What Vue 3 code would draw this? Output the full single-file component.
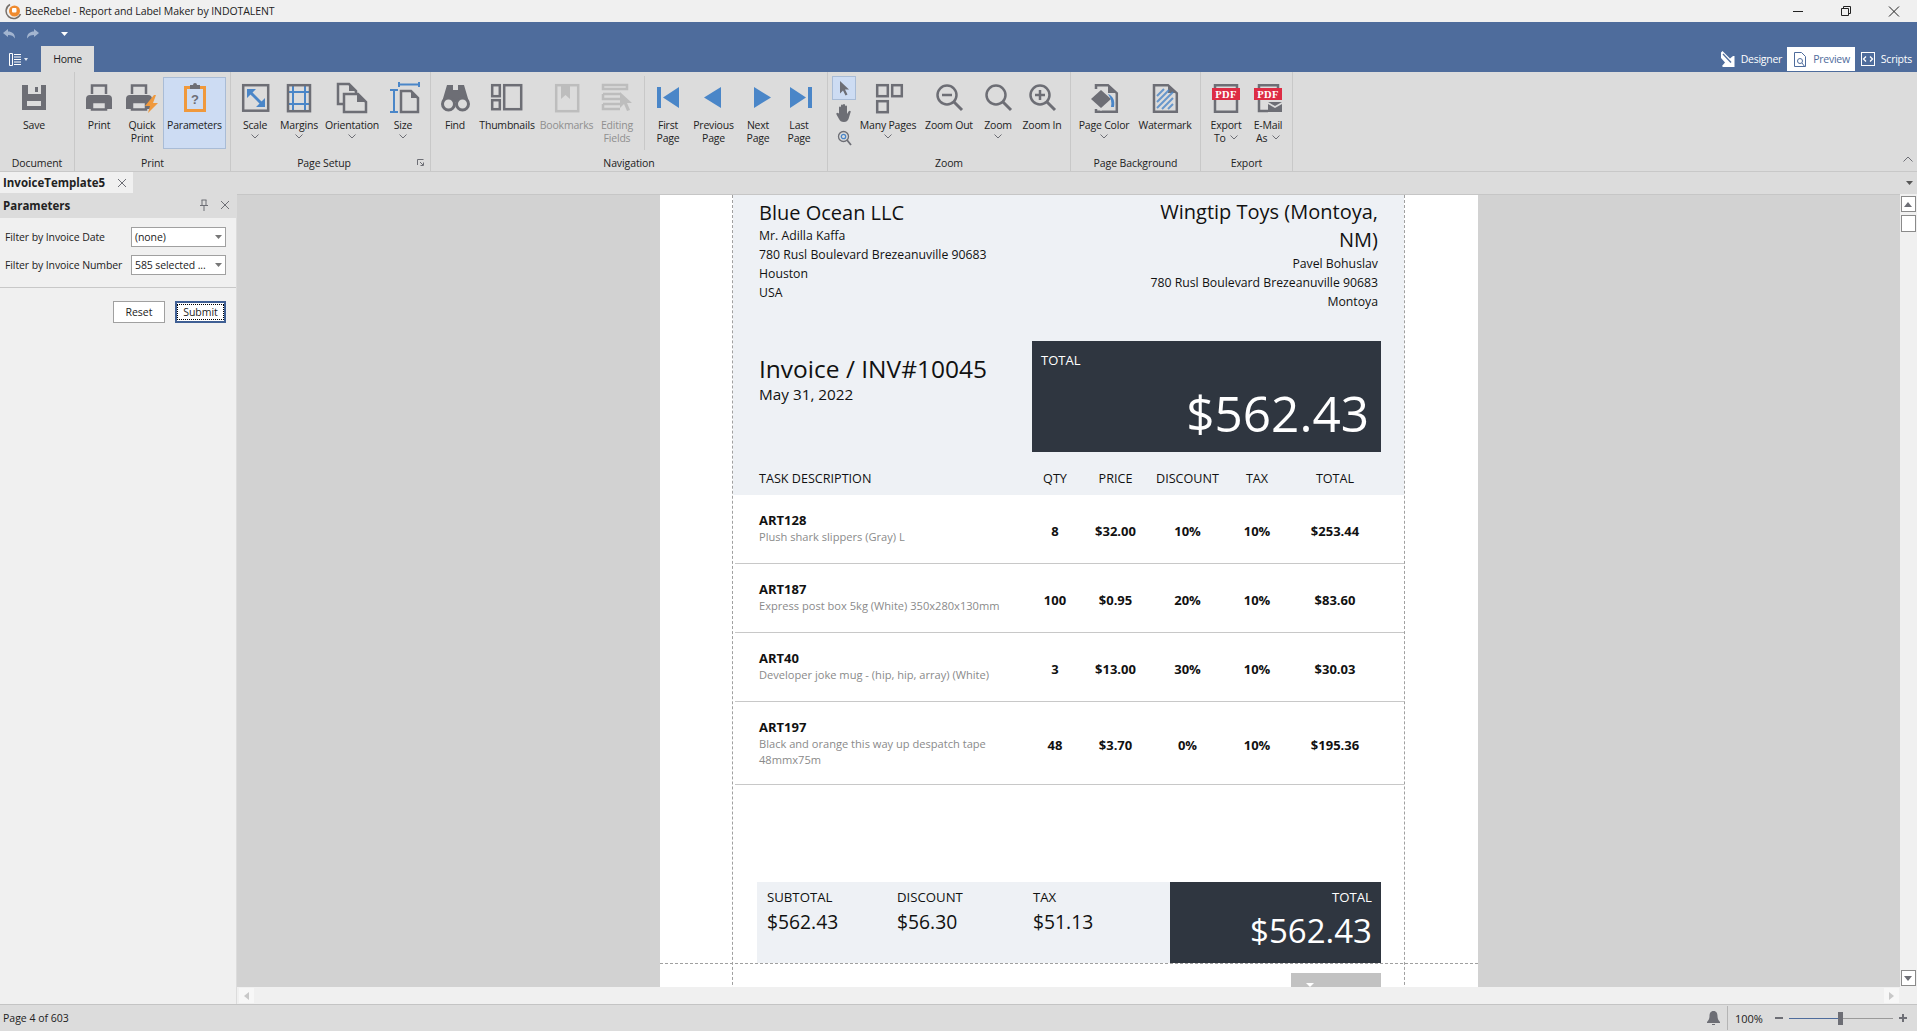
<script setup>
const G = '#6d6e75'
const B = '#4a86c8'
const O = '#f0993c'
const R = '#dd2c44'
const L = '#bdbdbd'
const paper = (s) => `fill="none" stroke="${s}" stroke-width="2.5"`

const printer = (x) => `<path ${paper(G)} d="M${x + 6} 13V4.5h14V13"/><path fill="${G}" d="M${x} 18a4 4 0 0 1 4-4h18a4 4 0 0 1 4 4v10h-5v-7H${x + 5}v7H${x}z"/><rect ${paper(G)} x="${x + 6}" y="21" width="14" height="7.5"/>`
const pdf = `<rect x="2" y="7" width="28" height="12" fill="${R}"/><text x="16" y="17" text-anchor="middle" font-family="Liberation Serif" font-weight="700" font-size="10.5" letter-spacing=".4" fill="#fff">PDF</text>`
const lens = (extra) => `<circle cx="14" cy="14" r="9.5" ${paper(G)}/><path stroke="${G}" stroke-width="3" d="M21 21l8 8"/>${extra}`

const icons = {
  save: `<path fill="${G}" fill-rule="evenodd" d="M4 4h24v25H4zM10 4v9h13V4zM9 20h14v5H9z"/><path fill="${G}" d="M17 6h3v5h-3z"/>`,
  print: printer(3),
  quick: printer(0) + `<path fill="${O}" d="M28 14l-9 11h5l-2 7 10-10h-5l3-8z"/>`,
  params: `<path fill="${O}" d="M5 5h6v3H8v20h16V8h-3V5h6v26H5z"/><path fill="${G}" d="M11 4h3a2 2 0 0 1 4 0h3v4H11z"/><text x="16" y="23" text-anchor="middle" font-family="Liberation Sans" font-weight="700" font-size="13" fill="${G}">?</text>`,
  scale: `<rect x="4.2" y="4.2" width="25" height="25.500" ${paper(G)}/><path stroke="${B}" stroke-width="3" d="M11 11l12 12"/><path fill="${B}" d="M8 8h9l-9 9zM26 26h-9l9-9z"/>`,
  margins: `<path stroke="${B}" stroke-width="2" fill="none" d="M10 4v26M22 4v26M4 11h24M4 23h24"/><rect x="5" y="4.200" width="22" height="26" ${paper(G)}/>`,
  orient: `<path ${paper(G)} d="M7 23H2V3h11l7 7v3"/><path fill="${G}" d="M13 3l7 7h-7z"/><path ${paper(G)} d="M8 13h14l8 8v10H8z"/><path fill="${G}" d="M21 13l9 8h-9z"/>`,
  size: `<path stroke="${B}" stroke-width="2" fill="none" d="M12 1v5M32 1v5M12 3.500h20M3 9h8M3 31h8M7 9v22"/><path ${paper(G)} d="M14 10h10l7 7v14H14z"/><path fill="${G}" d="M24 10l7 7h-7z"/>`,
  find: `<path fill="${G}" d="M8 4h6v5h5V4h6l5 17H3z"/><circle cx="9.500" cy="23" r="6" fill="#dcdcdc" stroke="${G}" stroke-width="3"/><circle cx="23.500" cy="23" r="6" fill="#dcdcdc" stroke="${G}" stroke-width="3"/>`,
  thumbs: `<g ${paper(G)}><rect x="1.200" y="4.200" width="7.600" height="11"/><rect x="1.200" y="19.200" width="7.600" height="9"/><rect x="13.200" y="4.200" width="17" height="24"/></g>`,
  bookmarks: `<rect x="5.200" y="4.200" width="22" height="26" ${paper(L)}/><path fill="${L}" d="M10 3h9v15l-4.500-4-4.500 4z"/>`,
  editing: `<g ${paper(L)}><path d="M2 4h24v4H2zM2 13h17M2 13v5h17M2 23h17M2 23v5h17"/></g><path fill="${L}" d="M19 11l12 11h-5l3 7-3 1-3-7-4 4z"/>`,
  first: `<path fill="${B}" d="M5 6h4v21H5zM27 6v21L11 16.500z"/>`,
  prev: `<path fill="${B}" d="M23 6v21L6 16.500z"/>`,
  next: `<path fill="${B}" d="M12 6v21l17-10.500z"/>`,
  last: `<path fill="${B}" d="M7 6v21l16-10.500zM25 6h4v21h-4z"/>`,
  many: `<g ${paper(G)}><rect x="5.200" y="4.200" width="10.600" height="11"/><rect x="20.200" y="4.200" width="9.600" height="11"/><rect x="5.200" y="20.200" width="10.600" height="11"/></g>`,
  zoomOut: lens(`<path stroke="${G}" stroke-width="2.500" d="M9 14h10"/>`),
  zoom: lens(''),
  zoomIn: lens(`<path stroke="${G}" stroke-width="2.500" d="M9 14h10M14 9v10"/>`),
  pageColor: `<path ${paper(G)} d="M8 8V4.200h12l8.800 8V30.800H8V28"/><path fill="${G}" d="M20 4l9 8h-9z"/><path fill="#dcdcdc" d="M1 18l12-12 12 12-12 12z"/><path fill="${G}" d="M3 18l10-9 10 9-10 9z"/><path fill="${B}" d="M20 13c5 2 7 6 6 13h-3c1-5 0-9-3-13z"/>`,
  watermark: `<path ${paper(G)} d="M5 4.200h14l8.800 8V30.800H5z"/><path fill="${G}" d="M19 4l9 8h-9z"/><path stroke="${B}" stroke-width="2" opacity=".8" d="M8 15l7-7M8 21l12-12M8 27l16-16M13 28l11-11M19 28l5-5"/>`,
  exportTo: `<path ${paper(G)} d="M5 19v11.800h22V19M5 7V4.200h22V7"/>` + pdf,
  email: `<path ${paper(G)} d="M7 19v11h9M7 7V4.200h19V7"/>` + pdf + `<path fill="${G}" d="M16 23l7 4 7-4v8H16z"/><path fill="${G}" d="M16 21h14l-7 4z"/>`
}

const groups = [
  { title: 'Document', x: 0, end: 75, items: [{ c: 34, icon: 'save', lines: ['Save'] }] },
  { title: 'Print', x: 75, end: 231, items: [
    { c: 99, icon: 'print', lines: ['Print'] },
    { c: 142, icon: 'quick', lines: ['Quick', 'Print'] },
    { c: 194.500, w: 63, icon: 'params', lines: ['Parameters'], active: true }
  ] },
  { title: 'Page Setup', x: 231, end: 431, launcher: true, items: [
    { c: 255, icon: 'scale', lines: ['Scale'], more: true },
    { c: 299, icon: 'margins', lines: ['Margins'], more: true },
    { c: 352, icon: 'orient', lines: ['Orientation'], more: true },
    { c: 403, icon: 'size', lines: ['Size'], more: true }
  ] },
  { title: 'Navigation', x: 431, end: 828, items: [
    { c: 455, icon: 'find', lines: ['Find'] },
    { c: 507, icon: 'thumbs', lines: ['Thumbnails'] },
    { c: 566.500, icon: 'bookmarks', lines: ['Bookmarks'], off: true },
    { c: 617, icon: 'editing', lines: ['Editing', 'Fields'], off: true },
    { c: 668, icon: 'first', lines: ['First', 'Page'] },
    { c: 713.500, icon: 'prev', lines: ['Previous', 'Page'] },
    { c: 758, icon: 'next', lines: ['Next', 'Page'] },
    { c: 799, icon: 'last', lines: ['Last', 'Page'] }
  ] },
  { title: 'Zoom', x: 828, end: 1071, items: [
    { c: 844, w: 24, tools: true },
    { c: 888, icon: 'many', lines: ['Many Pages'], more: true },
    { c: 949, icon: 'zoomOut', lines: ['Zoom Out'] },
    { c: 998, icon: 'zoom', lines: ['Zoom'], more: true },
    { c: 1042, icon: 'zoomIn', lines: ['Zoom In'] }
  ] },
  { title: 'Page Background', x: 1071, end: 1201, items: [
    { c: 1104, icon: 'pageColor', lines: ['Page Color'], more: true },
    { c: 1165, icon: 'watermark', lines: ['Watermark'] }
  ] },
  { title: 'Export', x: 1201, end: 1293, items: [
    { c: 1226, icon: 'exportTo', lines: ['Export', 'To'], inlineMore: true },
    { c: 1268, icon: 'email', lines: ['E-Mail', 'As'], inlineMore: true }
  ] }
]

for (const g of groups) {
  let cursor = g.x
  for (const it of g.items) {
    it.w = it.w || 40
    it.left = it.c - it.w / 2 - cursor
    cursor = it.c + it.w / 2
  }
}

const rows = [
  { code: 'ART128', desc: 'Plush shark slippers (Gray) L', qty: '8', price: '$32.00', disc: '10%', tax: '10%', total: '$253.44' },
  { code: 'ART187', desc: 'Express post box 5kg (White) 350x280x130mm', qty: '100', price: '$0.95', disc: '20%', tax: '10%', total: '$83.60' },
  { code: 'ART40', desc: 'Developer joke mug - (hip, hip, array) (White)', qty: '3', price: '$13.00', disc: '30%', tax: '10%', total: '$30.03' },
  { code: 'ART197', desc: 'Black and orange this way up despatch tape 48mmx75m', qty: '48', price: '$3.70', disc: '0%', tax: '10%', total: '$195.36' }
]
const heads = ['TASK DESCRIPTION', 'QTY', 'PRICE', 'DISCOUNT', 'TAX', 'TOTAL']
const subtotals = [
  { label: 'SUBTOTAL', value: '$562.43' },
  { label: 'DISCOUNT', value: '$56.30' },
  { label: 'TAX', value: '$51.13' }
]
</script>

<template>
  <div class="app">
    <header class="titlebar">
      <svg class="logo" width="17" height="17" viewBox="0 0 17 17">
        <path d="M5 1.500A7.500 7.500 0 1 0 15.500 11" fill="none" stroke="#77706a" stroke-width="1.500" />
        <circle cx="9.500" cy="8" r="5.500" fill="#ef8a2e" />
        <rect x="7" y="5" width="4.500" height="4.500" rx="1" fill="#fff" />
      </svg>
      <span class="app-title">BeeRebel - Report and Label Maker by INDOTALENT</span>
      <div class="win-controls">
        <svg width="48" height="22" viewBox="0 0 48 22"><path d="M19 11.500h10" stroke="#222" /></svg>
        <svg width="48" height="22" viewBox="0 0 48 22"><path d="M19.500 8.500h7v7h-7zM21.500 8.500v-2h7v7h-2" fill="none" stroke="#222" /></svg>
        <svg width="48" height="22" viewBox="0 0 48 22"><path d="M19 6.500l10 10M29 6.500l-10 10" stroke="#222" /></svg>
      </div>
    </header>

    <section class="bluebar">
      <div class="qat">
        <svg class="qat-icon" width="14" height="12" viewBox="0 0 14 12"><path d="M1 5l5-4v2.500c4 0 7 2 7 7-1.500-2.500-3.500-3.500-7-3.500V9z" fill="#a3b5d0" /></svg>
        <svg class="qat-icon redo" width="14" height="12" viewBox="0 0 14 12"><path d="M13 5L8 1v2.500c-4 0-7 2-7 7C2.500 8 4.500 7 8 7v2z" fill="#a3b5d0" /></svg>
        <svg class="qat-drop" width="7" height="4" viewBox="0 0 7 4"><path d="M0 0h7L3.500 4z" fill="#fff" /></svg>
      </div>
      <div class="tabrow">
        <div class="appmenu">
          <svg width="13" height="15" viewBox="0 0 13 15"><path d="M.5 1.500h3v12h-3zM5 2.500h7M5 5h7M5 7.500h7M5 10h7M5 12.500h7" stroke="#fff" fill="none" /></svg>
          <svg width="4" height="3" viewBox="0 0 4 3"><path d="M0 0h4L2 3z" fill="#dfe6f0" /></svg>
        </div>
        <div class="hometab">Home</div>
        <div class="views">
          <div class="view">
            <svg width="14" height="16" viewBox="0 0 14 16"><path d="M0 1.500L1.500 0 9 7.500 12 5h1.500v11H2l-1-1 3-3.500L0 7z" fill="#fff" /><path d="M2 3l8 8.500" stroke="#4e6c9c" stroke-width="1.300" /></svg>
            <span>Designer</span>
          </div>
          <div class="view current">
            <svg width="14" height="17" viewBox="0 0 14 17"><path d="M1.500 1.500h7l4 4v10h-11z" fill="none" stroke="#4e6c9c" /><circle cx="7" cy="10" r="2.500" fill="none" stroke="#4e6c9c" /><path d="M9 12l3 4" stroke="#4e6c9c" /></svg>
            <span>Preview</span>
          </div>
          <div class="view">
            <svg width="14" height="14" viewBox="0 0 14 14"><rect x=".5" y=".5" width="13" height="13" fill="none" stroke="#fff" /><path d="M5 4.500L2.500 7 5 9.500M9 4.500L11.500 7 9 9.500" fill="none" stroke="#fff" stroke-width="1.300" /></svg>
            <span>Scripts</span>
          </div>
        </div>
      </div>
    </section>

    <section class="ribbon">
      <div v-for="g in groups" :key="g.title" class="group" :style="{ width: g.end - g.x + 'px' }">
        <div class="group-items">
          <template v-for="it in g.items" :key="it.c">
            <div v-if="it.tools" class="tools" :style="{ width: it.w + 'px', marginLeft: it.left + 'px' }">
              <div class="tool tool-on">
                <svg width="14" height="16" viewBox="0 0 14 16"><path d="M3 1l9 8.500H8l2.500 5-2 1-2.500-5-3 3z" fill="#6d6e75" /></svg>
              </div>
              <div class="tool">
                <svg width="19" height="20" viewBox="0 0 19 20"><path d="M4 10V4.500a1 1 0 0 1 2 0V9V2.500a1 1 0 0 1 2 0V9V2a1 1 0 0 1 2 0v7V3.500a1 1 0 0 1 2 0V11l1.500-2.500c1-1.500 3-.5 2 1L13.500 16c-1 2-2 3-4.500 3-3 0-4-1-5-3l-2.500-4.500c-.7-1.500 1-2.500 2-1z" fill="#6d6e75" /></svg>
              </div>
              <div class="tool">
                <svg width="15" height="16" viewBox="0 0 15 16"><circle cx="6.500" cy="6.500" r="5" fill="none" stroke="#6d6e75" stroke-width="1.300" /><circle cx="6.500" cy="6.500" r="2.200" fill="none" stroke="#4a86c8" stroke-width="1.300" /><path d="M10 10l4 5" stroke="#6d6e75" stroke-width="1.800" /></svg>
              </div>
            </div>
            <div v-else class="rbtn" :class="{ active: it.active, off: it.off }" :style="{ width: it.w + 'px', marginLeft: it.left + 'px' }">
              <svg class="ricon" width="32" height="32" viewBox="0 0 32 32" v-html="icons[it.icon]"></svg>
              <span class="rlabel">{{ it.lines[0] }}</span>
              <span v-if="it.lines[1]" class="rlabel">
                {{ it.lines[1] }}
                <svg v-if="it.inlineMore" class="chev-inline" width="8" height="5" viewBox="0 0 8 5"><path d="M.5.500L4 4 7.500.500" fill="none" stroke="#6d6e75" /></svg>
              </span>
              <svg v-if="it.more" class="chev" width="8" height="5" viewBox="0 0 8 5"><path d="M.5.500L4 4 7.500.500" fill="none" stroke="#6d6e75" /></svg>
            </div>
          </template>
          <i v-if="g.title === 'Navigation'" class="nav-sep"></i>
        </div>
        <div class="caption" :class="{ 'has-launcher': g.launcher }">
          {{ g.title }}
          <svg v-if="g.launcher" class="launcher" width="7" height="7" viewBox="0 0 7 7"><path d="M.5 6V.5H6.500M3 3l3 3M6.500 3.500v3h-3" fill="none" stroke="#6d6e75" /></svg>
        </div>
      </div>
      <svg class="collapse" width="10" height="6" viewBox="0 0 10 6"><path d="M.5 5.500L5 1l4.500 4.500" fill="none" stroke="#6d6e75" /></svg>
    </section>

    <nav class="docstrip">
      <div class="doctab">
        <b>InvoiceTemplate5</b>
        <svg width="10" height="10" viewBox="0 0 10 10"><path d="M1 1l8 8M9 1L1 9" stroke="#6d6e75" /></svg>
      </div>
      <svg class="strip-drop" width="7" height="4" viewBox="0 0 7 4"><path d="M0 0h7L3.500 4z" fill="#555" /></svg>
    </nav>

    <main class="main">
      <aside class="panel">
        <div class="panel-head">
          <b>Parameters</b>
          <svg width="10" height="12" viewBox="0 0 10 12"><path d="M2.500 1h5M3 1v5M7 1v5M1 6.500h8M5 7v5" fill="none" stroke="#6d6e75" /></svg>
          <svg width="10" height="10" viewBox="0 0 10 10"><path d="M1 1l8 8M9 1L1 9" stroke="#6d6e75" /></svg>
        </div>
        <div class="fields">
          <div class="field">
            <label>Filter by Invoice Date</label>
            <div class="select"><span>(none)</span><svg width="7" height="4" viewBox="0 0 7 4"><path d="M0 0h7L3.500 4z" fill="#777" /></svg></div>
          </div>
          <div class="field">
            <label>Filter by Invoice Number</label>
            <div class="select"><span>585 selected ...</span><svg width="7" height="4" viewBox="0 0 7 4"><path d="M0 0h7L3.500 4z" fill="#777" /></svg></div>
          </div>
        </div>
        <div class="actions">
          <button class="btn" type="button">Reset</button>
          <button class="btn primary" type="button"><span>Submit</span></button>
        </div>
      </aside>

      <div class="canvas">
        <div class="canvas-top">
          <div class="viewport">
            <article class="page">
              <i class="guide guide-left"></i>
              <i class="guide guide-right"></i>

              <div class="band">
                <div class="parties">
                  <div class="from">
                    <h2>Blue Ocean LLC</h2>
                    <p>Mr. Adilla Kaffa</p>
                    <p>780 Rusl Boulevard Brezeanuville 90683</p>
                    <p>Houston</p>
                    <p>USA</p>
                  </div>
                  <div class="to">
                    <h2>Wingtip Toys (Montoya, NM)</h2>
                    <p>Pavel Bohuslav</p>
                    <p>780 Rusl Boulevard Brezeanuville 90683</p>
                    <p>Montoya</p>
                  </div>
                </div>
                <div class="headline">
                  <div class="inv">
                    <h1>Invoice / INV#10045</h1>
                    <p>May 31, 2022</p>
                  </div>
                  <div class="totalbox">
                    <div class="tb-label">TOTAL</div>
                    <div class="tb-value">$562.43</div>
                  </div>
                </div>
                <div class="grid thead">
                  <span v-for="(h, i) in heads" :key="h" :class="{ num: i > 0 }">{{ h }}</span>
                </div>
              </div>

              <div v-for="r in rows" :key="r.code" class="grid row">
                <div class="task">
                  <b>{{ r.code }}</b>
                  <span>{{ r.desc }}</span>
                </div>
                <b class="num val">{{ r.qty }}</b>
                <b class="num val">{{ r.price }}</b>
                <b class="num val">{{ r.disc }}</b>
                <b class="num val">{{ r.tax }}</b>
                <b class="num val">{{ r.total }}</b>
              </div>

              <div class="summary">
                <div class="sum-light">
                  <div v-for="s in subtotals" :key="s.label" class="sum-col">
                    <span>{{ s.label }}</span>
                    <strong>{{ s.value }}</strong>
                  </div>
                </div>
                <div class="sum-dark">
                  <span>TOTAL</span>
                  <strong>$562.43</strong>
                </div>
              </div>

              <div class="nextpage">
                <div class="next-block"><i></i></div>
              </div>
            </article>
          </div>
          <div class="vscroll">
            <div class="sb-btn"><svg width="8" height="5" viewBox="0 0 8 5"><path d="M4 0l4 5H0z" fill="#6d6e75" /></svg></div>
            <div class="sb-thumb"></div>
            <div class="sb-fill"></div>
            <div class="sb-btn"><svg width="8" height="5" viewBox="0 0 8 5"><path d="M0 0h8L4 5z" fill="#6d6e75" /></svg></div>
          </div>
        </div>
        <div class="hscroll">
          <div class="hs-btn"><svg width="5" height="8" viewBox="0 0 5 8"><path d="M5 0v8L0 4z" fill="#c8c8c8" /></svg></div>
          <div class="hs-btn"><svg width="5" height="8" viewBox="0 0 5 8"><path d="M0 0v8l5-4z" fill="#c8c8c8" /></svg></div>
        </div>
      </div>
    </main>

    <footer class="status">
      <span>Page 4 of 603</span>
      <div class="status-right">
        <svg class="bell" width="13" height="14" viewBox="0 0 13 14"><path d="M6.500 0c3 0 4 2.500 4 5 0 3 1 4 2.500 6v1H0v-1c1.500-2 2.500-3 2.500-6 0-2.500 1-5 4-5z" fill="#6d6e75" /><path d="M5 13h3v1H5z" fill="#6d6e75" /></svg>
        <i class="status-sep"></i>
        <span class="pct">100%</span>
        <svg class="zoom-minus" width="8" height="2" viewBox="0 0 8 2"><path d="M0 0h8v2H0z" fill="#6d6e75" /></svg>
        <div class="slider"><i class="slider-fill"></i><i class="slider-thumb"></i></div>
        <svg class="zoom-plus" width="8" height="8" viewBox="0 0 8 8"><path d="M3 0h2v3h3v2H5v3H3V5H0V3h3z" fill="#6d6e75" /></svg>
      </div>
    </footer>
  </div>
</template>

<style>
html, body { margin: 0; padding: 0; overflow: hidden; }
</style>

<style scoped>
.app {
  width: 1917px;
  height: 1031px;
  display: flex;
  flex-direction: column;
  overflow: hidden;
  font-family: "Open Sans", "Noto Sans", sans-serif;
  font-size: 10.500px;
  color: #222;
  background: #dcdcdc;
}
p, h1, h2 { margin: 0; font-weight: 400; }

.titlebar {
  height: 22px;
  flex: none;
  display: flex;
  align-items: center;
  padding-left: 5px;
  background: #f0f0f0;
}
.logo { margin-right: 3px; }
.app-title { font-size: 10.500px; letter-spacing: -.08px; }
.win-controls { margin-left: auto; display: flex; margin-right: -1px; }

.bluebar {
  height: 50px;
  flex: none;
  display: flex;
  flex-direction: column;
  background: #4e6c9c;
}
.qat { height: 24px; display: flex; align-items: center; padding-left: 2px; }
.qat-icon { margin-top: -1px; }
.redo { margin-left: 10px; }
.qat-drop { margin-left: 21px; }
.tabrow { height: 26px; display: flex; align-items: flex-end; }
.appmenu { width: 41px; height: 26px; display: flex; align-items: center; padding-left: 9px; gap: 2px; box-sizing: border-box; }
.hometab {
  width: 53px;
  height: 26px;
  display: flex;
  align-items: center;
  justify-content: center;
  background: #dcdcdc;
  letter-spacing: -.3px;
}
.views { margin-left: auto; display: flex; align-items: flex-end; height: 26px; color: #fff; padding-right: 5px; letter-spacing: -.25px; }
.view { height: 24px; margin-bottom: 1px; display: flex; align-items: center; gap: 6px; }
.view.current { background: #fff; color: #4e6c9c; padding: 0 5px 0 6px; margin: 0 6px 1px 5px; }

.ribbon {
  height: 100px;
  flex: none;
  display: flex;
  box-sizing: border-box;
  border-bottom: 1px solid #c8c8c8;
  position: relative;
}
.group {
  box-sizing: border-box;
  border-right: 1px solid #c8c8c8;
  display: flex;
  flex-direction: column;
  flex: none;
}
.group-items { position: relative; display: flex; height: 82px; padding-top: 5px; box-sizing: border-box; }
.rbtn {
  flex: none;
  height: 72px;
  padding-top: 4px;
  box-sizing: border-box;
  display: flex;
  flex-direction: column;
  align-items: center;
}
.rbtn.active { background: #cddcf3; box-shadow: inset 0 0 0 1px #a9bcd6; }
.rbtn.off .rlabel { color: #8f8f8f; }
.ricon { display: block; flex: none; overflow: visible; margin-bottom: 6px; }
.rlabel { display: block; height: 13px; line-height: 13px; white-space: nowrap; letter-spacing: -.2px; }
.chev { margin-top: 2px; }
.chev-inline { margin-left: 2px; vertical-align: 2px; }
.tools { flex: none; display: flex; flex-direction: column; align-items: center; }
.tool { width: 24px; height: 24px; display: flex; align-items: center; justify-content: center; box-sizing: border-box; }
.tool + .tool { margin-top: 1px; }
.tool-on { background: #cddcf3; border: 1px solid #a9bcd6; margin-top: -1px; }
.nav-sep { position: absolute; left: 213px; top: 4px; width: 1px; height: 74px; background: #c8c8c8; }
.caption { position: relative; height: 17px; line-height: 17px; padding-top: 1px; text-align: center; box-sizing: border-box; letter-spacing: -.1px; }
.caption.has-launcher { padding-right: 13px; }
.launcher { position: absolute; right: 6px; top: 5px; }
.collapse { position: absolute; right: 4px; top: 84px; }

.docstrip {
  height: 22px;
  flex: none;
  display: flex;
  align-items: stretch;
  position: relative;
}
.doctab {
  width: 133px;
  height: 21px;
  background: #f0f0f0;
  display: flex;
  align-items: center;
  padding-left: 3px;
  box-sizing: border-box;
  font-size: 11.500px;
}
.doctab svg { margin-left: 12px; }
.strip-drop { position: absolute; right: 4px; top: 9px; }

.main { flex: 1; min-height: 0; display: flex; }
.panel { width: 236px; flex: none; background: #f0f0f0; box-sizing: border-box; }
.panel-head {
  height: 24px;
  padding: 0 6px 2px 3px;
  background: #dcdcdc;
  display: flex;
  align-items: center;
  font-size: 11.500px;
  box-sizing: border-box;
}
.panel-head b { margin-right: auto; }
.panel-head svg + svg { margin-left: 11px; }
.fields { padding: 9px 10px 12px 5px; border-bottom: 1px solid #c8c8c8; display: flex; flex-direction: column; gap: 8px; }
.field { display: flex; align-items: center; justify-content: space-between; font-size: 10.500px; letter-spacing: -.1px; }
.select {
  width: 95px;
  height: 20px;
  box-sizing: border-box;
  border: 1px solid #a0a0a0;
  background: #fff;
  display: flex;
  align-items: center;
  justify-content: space-between;
  padding: 0 3px 0 3px;
}
.actions { display: flex; justify-content: flex-end; gap: 10px; padding: 13px 10px 0 0; }
.btn {
  height: 22px;
  width: 52px;
  padding: 0;
  box-sizing: border-box;
  border: 1px solid #a0a0a0;
  background: #fff;
  font: inherit;
  color: #222;
}
.btn.primary { border: 2px solid #3f5f94; width: 51px; }
.btn.primary span { display: block; margin: 1px; line-height: 14px; outline: 1px dotted #000; }

.canvas { flex: 1; min-width: 0; display: flex; flex-direction: column; margin-left: 1px; }
.canvas-top { flex: 1; min-height: 0; display: flex; }
.viewport {
  flex: 1;
  min-width: 0;
  overflow: hidden;
  background: #d2d2d2;
  border-top: 1px solid #c6c6c6;
  padding-left: 423px;
}
.page {
  position: relative;
  width: 818px;
  height: 810px;
  background: #fff;
  font-size: 13px;
  color: #111;
}
.guide { position: absolute; top: 0; bottom: 0; width: 0; border-left: 1px dashed #a0a0a0; z-index: 1; }
.guide-left { left: 72px; }
.guide-right { left: 744px; }

.band { margin-left: 73px; width: 671px; height: 300px; background: #eef1f5; display: flex; flex-direction: column; }
.parties { height: 146px; display: flex; justify-content: space-between; padding: 4px 26px 0; box-sizing: border-box; }
.parties h2 { font-size: 20px; line-height: 27px; }
.parties p { font-size: 12.250px; line-height: 19px; }
.to { width: 235px; text-align: right; margin-top: -1px; }
.to h2 { line-height: 28px; }
.headline { height: 111px; display: flex; justify-content: space-between; padding: 0 23px 0 26px; }
.inv { padding-top: 12px; }
.inv h1 { font-size: 24.500px; line-height: 32px; }
.inv p { font-size: 15.300px; line-height: 18px; }
.totalbox { width: 349px; height: 111px; background: #2f3640; color: #fff; box-sizing: border-box; padding: 10px 12px 0 9px; }
.tb-label { font-size: 13px; line-height: 18px; }
.tb-value { font-size: 49.500px; line-height: 60px; margin-top: 14px; text-align: right; }

.grid { display: grid; grid-template-columns: 266px 60px 61px 83px 56px 100px; }
.thead { height: 43px; padding: 17px 0 0 26px; box-sizing: border-box; font-size: 12.600px; line-height: 20px; }
.num { text-align: center; }
.row {
  margin: 0 0 0 75px;
  width: 669px;
  padding: 16px 0 16px 24px;
  min-height: 69px;
  box-sizing: border-box;
  border-bottom: 1px solid #c8c8c8;
}
.task b { display: block; font-size: 13px; line-height: 18px; }
.task span { display: block; font-size: 11.100px; line-height: 16px; color: #8a8a8a; }
.val { align-self: center; padding-top: 4px; font-size: 13px; }

.summary { margin: 97px 0 0 97px; width: 624px; height: 81px; display: flex; }
.sum-light { width: 413px; background: #eef1f5; display: flex; padding: 6px 0 0 10px; box-sizing: border-box; }
.sum-col { width: 130px; }
.sum-col:nth-child(2) { width: 136px; }
.sum-col span { display: block; font-size: 13.200px; line-height: 18px; }
.sum-col strong { display: block; font-weight: 400; font-size: 19.300px; line-height: 26px; margin-top: 3px; }
.sum-dark { flex: 1; background: #2f3640; color: #fff; text-align: right; padding: 6px 9px 0 0; box-sizing: border-box; }
.sum-dark span { display: block; font-size: 13.200px; line-height: 18px; }
.sum-dark strong { display: block; font-weight: 400; font-size: 33px; line-height: 40px; margin-top: 5px; }

.nextpage { border-top: 1px dashed #a0a0a0; padding: 9px 0 0 631px; }
.next-block { position: relative; width: 90px; height: 14px; background: #c2c2c2; }
.next-block i { position: absolute; left: 15px; top: 10px; width: 8px; height: 4px; background: #fff; clip-path: polygon(0 0, 100% 0, 50% 100%); }

.vscroll { width: 17px; flex: none; display: flex; flex-direction: column; align-items: center; background: #f0f0f0; padding: 2px 1px 1px 0; box-sizing: border-box; }
.sb-btn { width: 15px; height: 16px; flex: none; box-sizing: border-box; border: 1px solid #8a8a8a; background: #fff; display: flex; align-items: center; justify-content: center; }
.sb-thumb { width: 15px; height: 17px; flex: none; margin-top: 3px; box-sizing: border-box; border: 1px solid #8a8a8a; background: #fff; }
.sb-fill { flex: 1; }
.hscroll { height: 17px; flex: none; display: flex; justify-content: space-between; align-items: center; background: #f0f0f0; padding: 0 18px 0 2px; box-sizing: border-box; }
.hs-btn { width: 15px; height: 15px; background: #f7f7f7; display: flex; align-items: center; justify-content: center; }

.status {
  height: 27px;
  flex: none;
  box-sizing: border-box;
  border-top: 1px solid #c4c4c4;
  display: flex;
  align-items: center;
  padding-left: 3px;
}
.status-right { margin-left: auto; display: flex; align-items: center; height: 100%; padding-right: 10px; }
.status-sep { width: 1px; height: 24px; background: #b4b4b4; margin: 0 7px; }
.pct { font-size: 11px; width: 28px; }
.zoom-minus { margin-left: 12px; }
.slider { position: relative; width: 104px; height: 1px; margin: 0 6px 0 6px; background: #9a9a9a; }
.slider-fill { position: absolute; left: 0; top: 0; width: 50px; height: 1px; background: #4e6c9c; }
.slider-thumb { position: absolute; left: 49px; top: -6px; width: 5px; height: 13px; background: #6d6e75; }
</style>
